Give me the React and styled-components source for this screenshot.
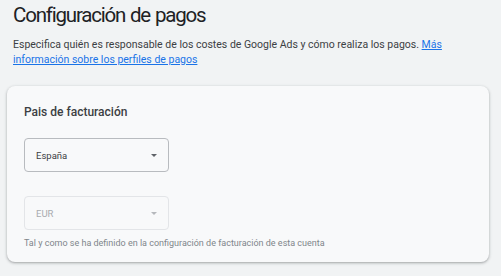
import React from "react";
import styled, { createGlobalStyle } from "styled-components";

const Global = createGlobalStyle`
  html, body { margin: 0; padding: 0; background: #f1f3f4; }
  body { font-family: Roboto, "Liberation Sans", Arial, sans-serif; color: #3c4043; }
  * { box-sizing: border-box; }
`;

const Page = styled.div`
  width: 501px;
  height: 276px;
  overflow: hidden;
  padding: 0 12px 0 7px;
  display: flex;
  flex-direction: column;
`;

const Header = styled.div`
  padding-left: 6px;
`;

const Title = styled.h1`
  margin: 0;
  padding-top: 1px;
  font-family: Roboto, "Open Sans", sans-serif;
  font-weight: 400;
  font-size: 20.5px;
  line-height: 28px;
  color: #202124;
  letter-spacing: -1.2px;
  word-spacing: 1px;
`;

const Description = styled.p`
  margin: 8px 0 0;
  font-size: 10.5px;
  line-height: 15px;
  color: #3c4043;
`;

const Link = styled.a`
  color: #1a73e8;
  text-decoration: underline;
`;

const Card = styled.section`
  margin-top: 19px;
  height: 176px;
  background: #f8f9fa;
  border-radius: 8px;
  box-shadow: 0 1px 2px rgba(60, 64, 67, 0.3), 0 1px 3px 1px rgba(60, 64, 67, 0.12);
  padding: 18px 17px 0;
  display: flex;
  flex-direction: column;
`;

const CardTitle = styled.h2`
  margin: 0;
  font-size: 12px;
  font-weight: 500;
  line-height: 16px;
  color: #3c4043;
`;

const Select = styled.div`
  width: 145px;
  height: 34px;
  margin-top: ${(p) => p.$mt}px;
  border: 1px solid ${(p) => (p.$disabled ? "#e3e5e8" : "#b8bbbf")};
  border-radius: 4px;
  display: flex;
  align-items: center;
  justify-content: space-between;
  padding: 0 11px 0 11px;
  font-size: 9.5px;
  color: ${(p) => (p.$disabled ? "#a8abaf" : "#3c4043")};
`;

const Arrow = styled.svg`
  width: 6px;
  height: 3px;
  display: block;
`;

const Helper = styled.div`
  margin-top: 7px;
  font-size: 9px;
  line-height: 12px;
  color: #80868b;
`;

const Caret = ({ color }) => (
  <Arrow viewBox="0 0 6 3">
    <path d="M0 0 L6 0 L3 3 Z" fill={color} />
  </Arrow>
);

export default function App() {
  return (
    <>
      <Global />
      <Page>
        <Header>
          <Title>Configuración de pagos</Title>
          <Description>
            Especifica quién es responsable de los costes de Google Ads y cómo realiza los pagos.{" "}
            <Link href="#">Más información sobre los perfiles de pagos</Link>
          </Description>
        </Header>
        <Card>
          <CardTitle>Pais de facturación</CardTitle>
          <Select $mt={18}>
            <span>España</span>
            <Caret color="#5f6368" />
          </Select>
          <Select $mt={24} $disabled>
            <span>EUR</span>
            <Caret color="#b5b8bc" />
          </Select>
          <Helper>Tal y como se ha definido en la configuración de facturación de esta cuenta</Helper>
        </Card>
      </Page>
    </>
  );
}
